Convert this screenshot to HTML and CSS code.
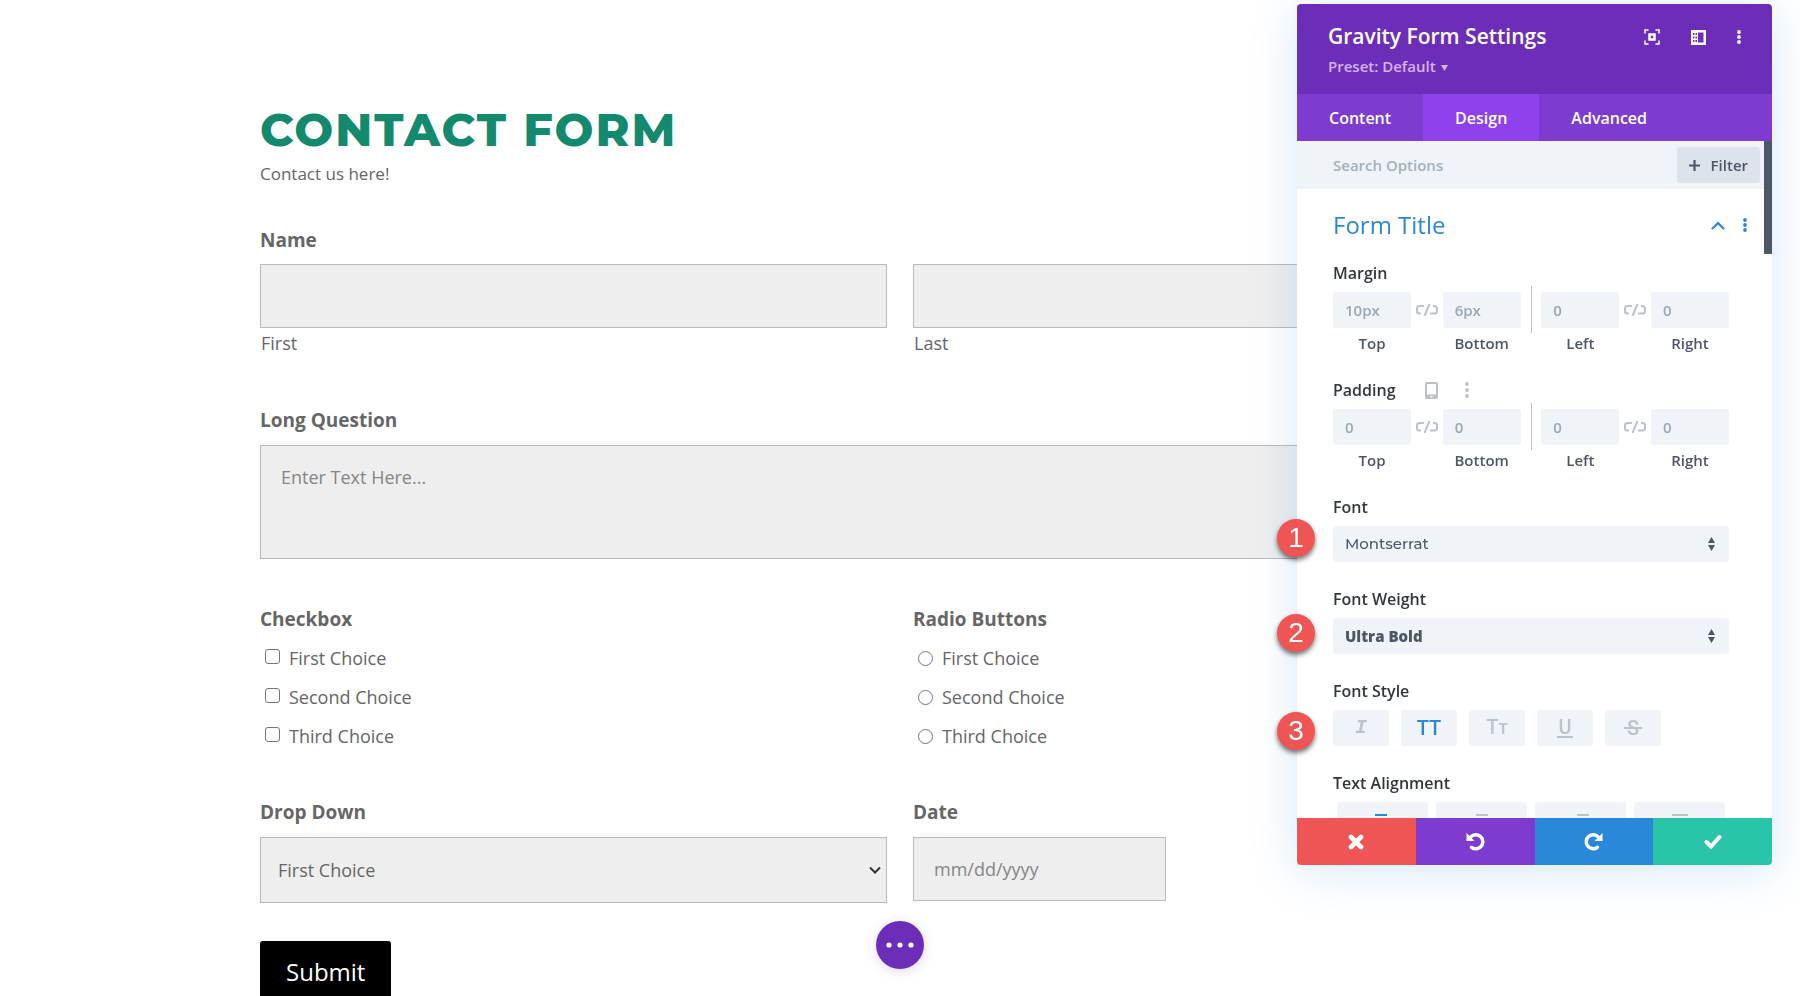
FILE: index.html
```html
<!DOCTYPE html>
<html lang="en">
<head>
    <meta charset="UTF-8">
    <meta name="viewport" content="width=device-width, initial-scale=1.0">
    <title>Contact Form</title>
    <link rel="stylesheet" href="styles.css">
</head>
<body>
    <main class="page">
        <h1 class="form-title">Contact Form</h1>
        <p class="form-description">Contact us here!</p>

        <form class="contact-form">
            <fieldset class="field full name-field">
                <legend class="field-label">Name</legend>
                <div class="columns">
                    <div>
                        <input class="box" type="text" id="first">
                        <label class="sub-label" for="first">First</label>
                    </div>
                    <div>
                        <input class="box" type="text" id="last">
                        <label class="sub-label" for="last">Last</label>
                    </div>
                </div>
            </fieldset>

            <div class="field full">
                <label class="field-label" for="question">Long Question</label>
                <textarea class="box" id="question" placeholder="Enter Text Here..."></textarea>
            </div>

            <fieldset class="field">
                <legend class="field-label">Checkbox</legend>
                <label class="choice"><input type="checkbox" name="check">First Choice</label>
                <label class="choice"><input type="checkbox" name="check">Second Choice</label>
                <label class="choice"><input type="checkbox" name="check">Third Choice</label>
            </fieldset>

            <fieldset class="field">
                <legend class="field-label">Radio Buttons</legend>
                <label class="choice"><input type="radio" name="radio">First Choice</label>
                <label class="choice"><input type="radio" name="radio">Second Choice</label>
                <label class="choice"><input type="radio" name="radio">Third Choice</label>
            </fieldset>

            <div class="field">
                <label class="field-label" for="dropdown">Drop Down</label>
                <div class="select-wrap">
                    <select class="box" id="dropdown">
                        <option>First Choice</option>
                        <option>Second Choice</option>
                        <option>Third Choice</option>
                    </select>
                    <svg class="select-arrow" width="12" height="8" viewBox="0 0 12 8"><path d="M1 1.5l5 5 5-5" fill="none" stroke="#333" stroke-width="2"/></svg>
                </div>
            </div>

            <div class="field">
                <label class="field-label" for="date">Date</label>
                <input class="box date" type="text" id="date" placeholder="mm/dd/yyyy">
            </div>

            <button class="submit" type="submit">Submit</button>
        </form>
    </main>

    <button class="builder-button" type="button" aria-label="Page settings">
        <svg width="28" height="6" viewBox="0 0 28 6" fill="#fff"><circle cx="3" cy="3" r="2.6"/><circle cx="14" cy="3" r="2.6"/><circle cx="25" cy="3" r="2.6"/></svg>
    </button>

    <aside class="panel">
        <header class="panel-header">
            <div>
                <h2>Gravity Form Settings</h2>
                <button class="preset" type="button">Preset: Default <svg width="7" height="6" viewBox="0 0 7 6"><path d="M0 0h7L3.5 6z" fill="currentColor"/></svg></button>
            </div>
            <div class="header-actions">
                <button type="button" aria-label="Focus">
                    <svg width="16" height="16" viewBox="0 0 16 16" fill="none" stroke="#fff" stroke-width="1.5"><path d="M1 4.5V1h3.5M11.5 1H15v3.5M15 11.5V15h-3.5M4.5 15H1v-3.5"/><rect x="5.5" y="5.5" width="5" height="5" stroke-width="2.5"/></svg>
                </button>
                <button type="button" aria-label="Dock">
                    <svg width="15" height="15" viewBox="0 0 15 15"><path d="M0 0h15v15H0zM7 2.5v10h5.5v-10z" fill="#fff" fill-rule="evenodd"/><path d="M2 3h1.5v2H2zM4.5 3H6v2H4.5zM2 6.5h1.5v2H2zM4.5 6.5H6v2H4.5zM2 10h1.5v2H2zM4.5 10H6v2H4.5z" fill="#6c2eb9"/></svg>
                </button>
                <button type="button" aria-label="More">
                    <svg width="4" height="14" viewBox="0 0 4 14" fill="#fff"><circle cx="2" cy="2" r="1.9"/><circle cx="2" cy="7" r="1.9"/><circle cx="2" cy="12" r="1.9"/></svg>
                </button>
            </div>
        </header>

        <nav class="tabs">
            <button type="button">Content</button>
            <button type="button" class="active">Design</button>
            <button type="button">Advanced</button>
        </nav>

        <div class="panel-body">
            <div class="search">
                <input type="text" placeholder="Search Options" aria-label="Search Options">
                <button class="filter" type="button">
                    <svg width="11" height="11" viewBox="0 0 11 11"><path d="M5.5 0v11M0 5.5h11" stroke="currentColor" stroke-width="2.2"/></svg>
                    Filter
                </button>
            </div>

            <div class="group-title">
                <h3>Form Title</h3>
                <button type="button" aria-label="Collapse">
                    <svg width="14" height="9" viewBox="0 0 14 9"><path d="M1.5 7.5L7 2l5.5 5.5" fill="none" stroke="#2b87da" stroke-width="2.2" stroke-linecap="round"/></svg>
                </button>
                <button type="button" aria-label="More">
                    <svg width="4" height="14" viewBox="0 0 4 14" fill="#2b87da"><circle cx="2" cy="2" r="1.9"/><circle cx="2" cy="7" r="1.9"/><circle cx="2" cy="12" r="1.9"/></svg>
                </button>
            </div>

            <div class="options">
                <div class="option spacing">
                    <div class="option-label">Margin</div>
                    <div class="sides">
                        <label><input type="text" placeholder="10px">Top</label>
                        <svg class="link" width="22" height="12" viewBox="0 0 22 12"><use href="#unlink"/></svg>
                        <label><input type="text" placeholder="6px">Bottom</label>
                        <span class="divider"></span>
                        <label><input type="text" placeholder="0">Left</label>
                        <svg class="link" width="22" height="12" viewBox="0 0 22 12"><use href="#unlink"/></svg>
                        <label><input type="text" placeholder="0">Right</label>
                    </div>
                </div>

                <div class="option spacing">
                    <div class="option-label">Padding
                        <button type="button" aria-label="Responsive">
                            <svg width="13" height="17" viewBox="0 0 13 17"><path d="M2 0h9a2 2 0 0 1 2 2v13a2 2 0 0 1-2 2H2a2 2 0 0 1-2-2V2a2 2 0 0 1 2-2zM2 2v10.5h9V2zM5.5 14v1.5h2V14z" fill="#bcc0c7" fill-rule="evenodd"/></svg>
                        </button>
                        <button type="button" aria-label="More">
                            <svg width="4" height="16" viewBox="0 0 4 16" fill="#bcc0c7"><circle cx="2" cy="2" r="1.9"/><circle cx="2" cy="8" r="1.9"/><circle cx="2" cy="14" r="1.9"/></svg>
                        </button>
                    </div>
                    <div class="sides">
                        <label><input type="text" placeholder="0">Top</label>
                        <svg class="link" width="22" height="12" viewBox="0 0 22 12"><use href="#unlink"/></svg>
                        <label><input type="text" placeholder="0">Bottom</label>
                        <span class="divider"></span>
                        <label><input type="text" placeholder="0">Left</label>
                        <svg class="link" width="22" height="12" viewBox="0 0 22 12"><use href="#unlink"/></svg>
                        <label><input type="text" placeholder="0">Right</label>
                    </div>
                </div>

                <div class="option">
                    <label class="option-label" for="font">Font</label>
                    <div class="select-wrap">
                        <select id="font" class="font-select"><option>Montserrat</option></select>
                        <svg class="sort-arrow" width="7" height="14" viewBox="0 0 7 14"><path d="M3.5 0L7 6H0zM3.5 14L0 8h7z" fill="#4c5866"/></svg>
                    </div>
                </div>

                <div class="option">
                    <label class="option-label" for="weight">Font Weight</label>
                    <div class="select-wrap">
                        <select id="weight" class="weight-select"><option>Ultra Bold</option></select>
                        <svg class="sort-arrow" width="7" height="14" viewBox="0 0 7 14"><path d="M3.5 0L7 6H0zM3.5 14L0 8h7z" fill="#4c5866"/></svg>
                    </div>
                </div>

                <div class="option">
                    <div class="option-label">Font Style</div>
                    <div class="styles">
                        <button type="button" aria-label="Italic"><span class="italic">I</span></button>
                        <button type="button" aria-label="Uppercase" class="active">TT</button>
                        <button type="button" aria-label="Small caps"><span>T<small>T</small></span></button>
                        <button type="button" aria-label="Underline"><span class="underline">U</span></button>
                        <button type="button" aria-label="Strikethrough"><span class="strike">S</span></button>
                    </div>
                </div>

                <div class="option">
                    <div class="option-label">Text Alignment</div>
                    <div class="aligns">
                        <button type="button" class="active" aria-label="Left"><svg width="16" height="12" viewBox="0 0 16 12" stroke="currentColor" stroke-width="2"><path d="M0 1h12M0 6h16M0 11h12"/></svg></button>
                        <button type="button" aria-label="Center"><svg width="16" height="12" viewBox="0 0 16 12" stroke="currentColor" stroke-width="2"><path d="M2 1h12M0 6h16M2 11h12"/></svg></button>
                        <button type="button" aria-label="Right"><svg width="16" height="12" viewBox="0 0 16 12" stroke="currentColor" stroke-width="2"><path d="M4 1h12M0 6h16M4 11h12"/></svg></button>
                        <button type="button" aria-label="Justify"><svg width="16" height="12" viewBox="0 0 16 12" stroke="currentColor" stroke-width="2"><path d="M0 1h16M0 6h16M0 11h16"/></svg></button>
                    </div>
                </div>
            </div>
            <span class="scrollbar"></span>
        </div>

        <footer class="panel-footer">
            <button type="button" class="discard" aria-label="Discard">
                <svg width="16" height="16" viewBox="0 0 16 16"><path d="M3 3l10 10M13 3L3 13" stroke="#fff" stroke-width="4.6" stroke-linecap="round"/></svg>
            </button>
            <button type="button" class="undo" aria-label="Undo">
                <svg width="19" height="19" viewBox="0 0 19 19"><path d="M4.5 5.2A7 7 0 1 1 5.5 15.3" fill="none" stroke="#fff" stroke-width="3.4" stroke-linecap="round"/><path d="M.5 1v8h8z" fill="#fff"/></svg>
            </button>
            <button type="button" class="redo" aria-label="Redo">
                <svg width="19" height="19" viewBox="0 0 19 19"><path d="M14.5 5.2A7 7 0 1 0 13.5 15.3" fill="none" stroke="#fff" stroke-width="3.4" stroke-linecap="round"/><path d="M18.5 1v8h-8z" fill="#fff"/></svg>
            </button>
            <button type="button" class="save" aria-label="Save">
                <svg width="18" height="15" viewBox="0 0 18 15"><path d="M2.5 8l4.5 4.5L15.5 3" fill="none" stroke="#fff" stroke-width="4" stroke-linecap="round"/></svg>
            </button>
        </footer>

        <span class="badge one">1</span>
        <span class="badge two">2</span>
        <span class="badge three">3</span>
    </aside>

    <svg width="0" height="0" class="defs">
        <symbol id="unlink" viewBox="0 0 22 12"><path d="M8 2H3.5Q1 2 1 4.5V7.5Q1 9.5 3.5 9.5H5M14 9.5h4.5q2.5 0 2.5-2.5V4.5Q21 2 18.5 2H17M13.5 0L8.5 12" fill="none" stroke="#bcc3cd" stroke-width="2"/></symbol>
    </svg>
</body>
</html>
```
FILE: styles.css
```css
* {
    box-sizing: border-box;
}

body {
    margin: 0;
    min-height: 100vh;
    background: #fff;
    color: #666;
    font-family: "Open Sans", Arial, sans-serif;
    font-size: 18px;
    line-height: 24px;
}

h1, h2, h3, p, fieldset, legend {
    margin: 0;
    padding: 0;
    border: 0;
}

button, input, select, textarea {
    font: inherit;
    color: inherit;
    margin: 0;
    border: 0;
    border-radius: 0;
}

button {
    padding: 0;
    background: none;
    cursor: pointer;
}

button svg {
    display: block;
}

.defs {
    position: absolute;
}

/* Contact form */
.page {
    max-width: 1280px;
    margin: 0 auto;
    padding-top: 106px;
    overflow: hidden;
}

.form-title {
    color: #13896d;
    font-family: Montserrat, Inter, sans-serif;
    font-size: 46px;
    font-weight: 800;
    line-height: 48px;
    letter-spacing: 2px;
    text-transform: uppercase;
}

.form-description {
    margin-top: 8px;
    font-size: 17px;
}

.contact-form {
    display: grid;
    grid-template-columns: 1fr 1fr;
    column-gap: 26px;
    row-gap: 48px;
    margin-top: 42px;
}

.columns {
    display: grid;
    grid-template-columns: 1fr 1fr;
    gap: 26px;
}

.full {
    grid-column: 1 / -1;
}

.name-field {
    padding-bottom: 5px;
}

.field-label {
    display: block;
    margin-bottom: 13px;
    font-size: 19px;
    font-weight: 700;
}

legend.field-label {
    margin-bottom: 12px;
}

.box {
    display: block;
    width: 100%;
    height: 64px;
    padding: 0 20px;
    background: #eee;
    border: 1px solid #bbb;
    color: #666;
}

.box::placeholder {
    color: #858585;
    opacity: 1;
}

.sub-label {
    display: block;
    margin-top: 3px;
    padding-left: 1px;
    line-height: 24px;
}

textarea.box {
    height: 114px;
    padding-top: 19px;
    resize: none;
}

.choice {
    display: flex;
    align-items: center;
    gap: 9px;
    height: 24px;
    margin-bottom: 15px;
    padding-left: 5px;
}

.field-label + .choice {
    margin-top: 3px;
}

.choice:last-child {
    margin-bottom: 4px;
}

.choice input {
    appearance: none;
    width: 15px;
    height: 15px;
    border: 1px solid #767676;
    border-radius: 3px;
    background: #fff;
}

.choice input[type="checkbox"] {
    margin-bottom: 4px;
}

.choice input[type="radio"] {
    border-radius: 50%;
}

.select-wrap {
    position: relative;
}

.select-wrap select {
    appearance: none;
}

.select-arrow {
    position: absolute;
    right: 6px;
    top: 29px;
}

select.box {
    height: 66px;
    padding: 0 17px;
}

.date {
    width: 253px;
}

.submit {
    justify-self: start;
    height: 62px;
    padding: 0 26px;
    margin-top: -10px;
    background: #000;
    border-radius: 3px;
    color: #fff;
    font-size: 24px;
}

.builder-button {
    position: fixed;
    left: 50%;
    bottom: 27px;
    display: flex;
    align-items: center;
    justify-content: center;
    width: 48px;
    height: 48px;
    margin-left: -24px;
    border-radius: 50%;
    background: #6c2eb9;
    box-shadow: 0 2px 12px rgba(108, 46, 185, 0.2);
}

/* Settings panel */
.panel {
    position: fixed;
    top: 4px;
    right: 28px;
    bottom: 131px;
    display: flex;
    flex-direction: column;
    width: 475px;
    border-radius: 4px;
    background: #fff;
    box-shadow: 0 6px 48px rgba(43, 135, 218, 0.2);
    color: #4c5866;
    font-size: 15px;
    font-weight: 600;
}

.panel-header {
    display: flex;
    justify-content: space-between;
    height: 90px;
    padding: 18px 31px;
    border-radius: 4px 4px 0 0;
    background: #6c2eb9;
    color: #fff;
}

.panel-header h2 {
    font-size: 21px;
    font-weight: 600;
    line-height: 28px;
}

.preset {
    display: flex;
    align-items: center;
    gap: 5px;
    margin-top: 4px;
    color: #d5b4f5;
    line-height: 24px;
}

.preset svg {
    margin-top: 3px;
}

.header-actions {
    display: flex;
    align-items: center;
    gap: 31px;
    height: 30px;
}

.tabs {
    display: flex;
    background: #7e3bd0;
    color: #fff;
    font-size: 16px;
}

.tabs button {
    height: 47px;
    padding: 0 32px;
}

.tabs .active {
    background: #8f42ec;
}

.panel-body {
    position: relative;
    flex: 1;
    overflow: hidden;
}

.scrollbar {
    position: absolute;
    top: 0;
    right: 0;
    width: 8px;
    height: 113px;
    background: #4c5866;
}

.search {
    display: flex;
    align-items: center;
    height: 48px;
    padding: 0 12px 0 36px;
    background: #f0f4f9;
}

.search input {
    flex: 1;
    min-width: 0;
    padding: 0;
    background: none;
}

.search input::placeholder {
    color: #a3b0bf;
    opacity: 1;
}

.filter {
    display: flex;
    align-items: center;
    gap: 11px;
    height: 36px;
    padding: 0 12px;
    border-radius: 3px;
    background: #dde3eb;
}

.group-title {
    display: flex;
    align-items: center;
    gap: 18px;
    padding: 20px 25px 0 36px;
    color: #2b87da;
}

.group-title h3 {
    flex: 1;
    font-size: 24px;
    font-weight: 400;
    line-height: 32px;
}

.options {
    padding: 20px 43px 0 36px;
}

.option {
    margin-bottom: 25px;
}

.option-label {
    display: flex;
    align-items: center;
    height: 24px;
    margin-bottom: 7px;
    color: #32373c;
    font-size: 16px;
}

.option-label button {
    margin-left: 29px;
}

.option-label button + button {
    margin-left: 27px;
}

.spacing {
    margin-bottom: 23px;
}

.sides {
    display: flex;
    justify-content: space-between;
}

.sides label {
    flex: 0 1 78px;
    min-width: 0;
    text-align: center;
    line-height: 24px;
}

.sides input {
    display: block;
    width: 100%;
    height: 36px;
    margin-bottom: 3px;
    padding: 0 12px;
    border-radius: 3px;
    background: #f0f4f9;
}

.sides input::placeholder {
    color: #9aa7b6;
    opacity: 1;
}

.link {
    margin-top: 12px;
}

.divider {
    width: 1px;
    height: 47px;
    margin: -6px 4px 0 6px;
    background: #bcc3cd;
}

.panel select {
    display: block;
    width: 100%;
    height: 36px;
    padding: 0 12px;
    border-radius: 3px;
    background: #f0f4f9;
}

.panel .font-select {
    font-family: Montserrat, Inter, sans-serif;
    font-weight: 500;
}

.panel .weight-select {
    font-weight: 800;
}

.sort-arrow {
    position: absolute;
    top: 11px;
    right: 14px;
}

.styles {
    display: flex;
    gap: 12px;
}

.styles button {
    display: flex;
    align-items: center;
    justify-content: center;
    width: 56px;
    height: 36px;
    border-radius: 3px;
    background: #f0f4f9;
    color: #bcc3cd;
    font-family: Roboto, sans-serif;
    font-size: 20px;
    font-weight: 500;
}

.styles .active, .aligns .active {
    color: #2b87da;
}

.styles small {
    font-size: 15px;
    font-weight: 700;
}

.italic {
    font-family: "Liberation Mono", monospace;
    font-style: italic;
    font-weight: 700;
}

.underline {
    width: 16px;
    border-bottom: 2px solid;
    line-height: 18px;
}

.strike {
    position: relative;
    padding: 0 3px;
}

.strike::after {
    content: "";
    position: absolute;
    top: 11px;
    left: 0;
    width: 100%;
    height: 2px;
    background: #bcc3cd;
}

.aligns {
    display: flex;
    gap: 8px;
    padding: 0 4px;
}

.aligns button {
    display: flex;
    flex: 1;
    align-items: center;
    justify-content: center;
    height: 36px;
    border-radius: 3px;
    background: #f0f4f9;
    color: #bcc3cd;
}

.panel-footer {
    display: flex;
    border-radius: 0 0 4px 4px;
    overflow: hidden;
}

.panel-footer button {
    display: flex;
    flex: 1;
    align-items: center;
    justify-content: center;
    height: 47px;
}

.discard {
    background: #ef5555;
}

.undo {
    background: #7e3bd0;
}

.redo {
    background: #2b87da;
}

.save {
    background: #29c4a9;
}

/* Step markers over the panel edge */
.badge {
    position: absolute;
    left: -20px;
    width: 38px;
    height: 38px;
    border-radius: 50%;
    background: #ef5555;
    box-shadow: 0 3px 5px rgba(0, 0, 0, 0.55);
    color: #fff;
    font-family: "Liberation Sans", Arial, sans-serif;
    font-size: 28px;
    font-weight: 400;
    line-height: 38px;
    text-align: center;
}

.one {
    top: 515px;
}

.two {
    top: 610px;
}

.three {
    top: 708px;
}
```
